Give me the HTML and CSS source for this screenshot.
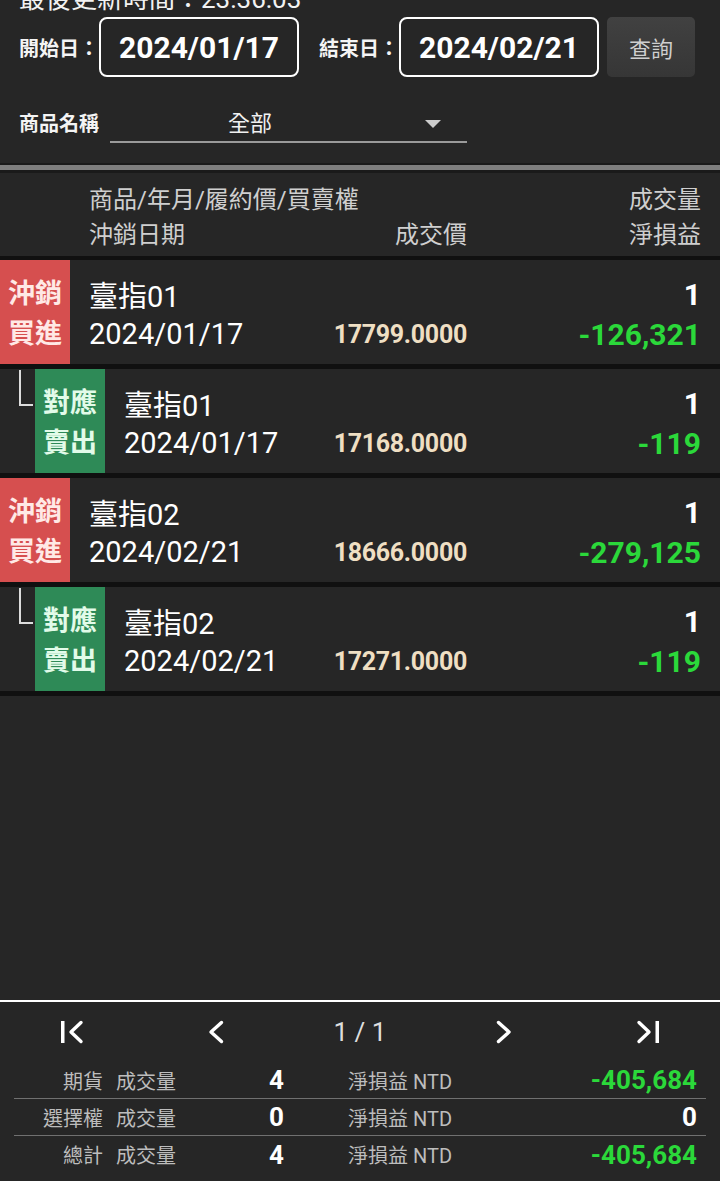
FILE: index.html
```html
<!DOCTYPE html>
<html lang="zh-Hant">
  <head>
    <meta charset="UTF-8" />
    <meta name="viewport" content="width=device-width, initial-scale=1.0" />
    <title>沖銷明細</title>
    <link rel="stylesheet" href="styles.css">
  </head>

  <body>
    <div class="updated">最後更新時間：23:36:03</div>

    <div class="query-row">
      <span class="field-label">開始日：</span>
      <div class="date-box">2024/01/17</div>
      <span class="field-label gap-left">結束日：</span>
      <div class="date-box">2024/02/21</div>
      <button class="query-btn" type="button">查詢</button>
    </div>

    <div class="product-row">
      <span class="field-label">商品名稱</span>
      <div class="dropdown">
        <span class="dropdown-text">全部</span>
        <span class="dropdown-arrow"></span>
      </div>
    </div>

    <div class="divider"></div>

    <div class="list-head">
      <div class="lead-space"></div>
      <div class="cells">
        <span>商品/年月/履約價/買賣權</span>
        <span></span>
        <span class="right">成交量</span>
        <span>沖銷日期</span>
        <span class="right">成交價</span>
        <span class="right">淨損益</span>
      </div>
    </div>

    <main class="list">
      <div class="trade">
        <div class="badge badge-buy">沖銷<br />買進</div>
        <div class="cells">
          <span class="name">臺指01</span>
          <span></span>
          <span class="qty">1</span>
          <span class="date">2024/01/17</span>
          <span class="price">17799.0000</span>
          <span class="pnl">-126,321</span>
        </div>
      </div>

      <div class="trade">
        <div class="tree"><span class="tree-line"></span></div>
        <div class="badge badge-sell">對應<br />賣出</div>
        <div class="cells">
          <span class="name">臺指01</span>
          <span></span>
          <span class="qty">1</span>
          <span class="date">2024/01/17</span>
          <span class="price">17168.0000</span>
          <span class="pnl">-119</span>
        </div>
      </div>

      <div class="trade">
        <div class="badge badge-buy">沖銷<br />買進</div>
        <div class="cells">
          <span class="name">臺指02</span>
          <span></span>
          <span class="qty">1</span>
          <span class="date">2024/02/21</span>
          <span class="price">18666.0000</span>
          <span class="pnl">-279,125</span>
        </div>
      </div>

      <div class="trade">
        <div class="tree"><span class="tree-line"></span></div>
        <div class="badge badge-sell">對應<br />賣出</div>
        <div class="cells">
          <span class="name">臺指02</span>
          <span></span>
          <span class="qty">1</span>
          <span class="date">2024/02/21</span>
          <span class="price">17271.0000</span>
          <span class="pnl">-119</span>
        </div>
      </div>
    </main>

    <footer class="bottom">
      <div class="pager">
        <span class="pager-btn">
          <svg width="24" height="24" viewBox="0 0 24 24">
            <rect x="1" y="1" width="3.5" height="22" fill="#fff" />
            <path d="M21 2.5 L11 12 L21 21.5" fill="none" stroke="#fff" stroke-width="3.4" stroke-linecap="round" stroke-linejoin="round" />
          </svg>
        </span>
        <span class="pager-btn">
          <svg width="16" height="24" viewBox="0 0 16 24">
            <path d="M13.5 2.5 L3 12 L13.5 21.5" fill="none" stroke="#fff" stroke-width="3.4" stroke-linecap="round" stroke-linejoin="round" />
          </svg>
        </span>
        <span class="pager-page">1 / 1</span>
        <span class="pager-btn">
          <svg width="16" height="24" viewBox="0 0 16 24">
            <path d="M2.5 2.5 L13 12 L2.5 21.5" fill="none" stroke="#fff" stroke-width="3.4" stroke-linecap="round" stroke-linejoin="round" />
          </svg>
        </span>
        <span class="pager-btn">
          <svg width="24" height="24" viewBox="0 0 24 24">
            <path d="M3 2.5 L13 12 L3 21.5" fill="none" stroke="#fff" stroke-width="3.4" stroke-linecap="round" stroke-linejoin="round" />
            <rect x="19.5" y="1" width="3.5" height="22" fill="#fff" />
          </svg>
        </span>
      </div>

      <div class="summary">
        <div class="sum-row">
          <span class="sum-kind">期貨</span>
          <span class="sum-label">成交量</span>
          <span class="sum-value">4</span>
          <span class="sum-label pnl-label">淨損益 NTD</span>
          <span class="sum-value loss">-405,684</span>
        </div>
        <div class="sum-row">
          <span class="sum-kind">選擇權</span>
          <span class="sum-label">成交量</span>
          <span class="sum-value">0</span>
          <span class="sum-label pnl-label">淨損益 NTD</span>
          <span class="sum-value">0</span>
        </div>
        <div class="sum-row">
          <span class="sum-kind">總計</span>
          <span class="sum-label">成交量</span>
          <span class="sum-value">4</span>
          <span class="sum-label pnl-label">淨損益 NTD</span>
          <span class="sum-value loss">-405,684</span>
        </div>
      </div>
    </footer>
  </body>
</html>
```

FILE: styles.css
```css
* {
  padding: 0;
  margin: 0;
  box-sizing: border-box;
}

body {
  display: flex;
  flex-direction: column;
  height: 100vh;
  overflow: hidden;
  background-color: #262626;
  color: #ffffff;
  font-family: Roboto, "Noto Sans CJK TC", sans-serif;
}

.updated {
  margin-top: -14px;
  padding-left: 19px;
  font-size: 26px;
  line-height: 26px;
  color: #f2f2f2;
}

/* date query */
.query-row {
  display: flex;
  align-items: center;
  margin-top: 5px;
  padding-left: 19px;
  height: 60px;
}

.field-label {
  font-size: 20px;
  font-weight: 700;
  color: #f4f4f4;
}

.gap-left {
  margin-left: 20px;
}

.date-box {
  width: 200px;
  height: 60px;
  border: 2px solid #ffffff;
  border-radius: 8px;
  display: flex;
  align-items: center;
  justify-content: center;
  font-size: 30px;
  font-weight: 700;
}

.query-btn {
  margin-left: 8px;
  width: 88px;
  height: 60px;
  border: none;
  border-radius: 5px;
  background: linear-gradient(#414141, #363636);
  color: #cfcfcf;
  font-family: inherit;
  font-size: 22px;
}

.product-row {
  display: flex;
  align-items: flex-end;
  margin-top: 24px;
  padding-left: 19px;
}

.product-row .field-label {
  line-height: 34px;
  padding-bottom: 2px;
}

.dropdown {
  display: flex;
  align-items: center;
  margin-left: 11px;
  width: 357px;
  padding-top: 6px;
  border-bottom: 2px solid #9a9a9a;
}

.dropdown-text {
  padding-left: 118px;
  font-size: 22px;
  line-height: 34px;
  color: #f0f0f0;
}

.dropdown-arrow {
  margin-left: auto;
  margin-right: 26px;
  width: 0;
  height: 0;
  border-left: 8px solid transparent;
  border-right: 8px solid transparent;
  border-top: 8px solid #cccccc;
}

.divider {
  margin-top: 20px;
  height: 10px;
  border-top: 2px solid #1a1a1a;
  border-bottom: 3px solid #1a1a1a;
  background-color: #7e7e7e;
}

/* list */
.list-head {
  display: flex;
  height: 87px;
  padding: 7px 19px 0 0;
  border-bottom: 4px solid #101010;
  font-size: 24px;
  line-height: 35px;
  color: #cfcfcf;
}

.lead-space {
  width: 70px;
}

.cells {
  flex: 1;
  display: grid;
  grid-template-columns: 1fr auto 234px;
  align-content: center;
  padding-left: 19px;
}

.right {
  text-align: right;
}

.list {
  flex: 1;
}

.trade {
  display: flex;
  height: 109px;
  padding-right: 19px;
  border-bottom: 5px solid #101010;
}

.trade .cells {
  padding-top: 4px;
  grid-template-rows: 40px 40px;
  align-items: center;
}

.badge {
  width: 70px;
  display: flex;
  align-items: center;
  justify-content: center;
  padding-top: 4px;
  font-size: 27px;
  font-weight: 700;
  line-height: 40px;
  text-align: center;
}

.badge-buy {
  background-color: #d64f4f;
  color: #ffe9e6;
}

.badge-sell {
  background-color: #2e8a57;
  color: #e2fbe9;
}

.tree {
  width: 35px;
  padding: 1px 0 0 19px;
}

.tree-line {
  display: block;
  width: 14px;
  height: 36px;
  border-left: 2px solid #dddddd;
  border-bottom: 2px solid #dddddd;
}

.name,
.date {
  font-size: 29px;
}

.qty,
.pnl {
  text-align: right;
  font-size: 30px;
  font-weight: 700;
}

.price {
  text-align: right;
  font-size: 25px;
  font-weight: 700;
  color: #efdfc3;
  letter-spacing: -0.3px;
}

.pnl,
.loss {
  color: #2bd83a;
}

/* bottom panel */
.bottom {
  border-top: 2px solid #ffffff;
  padding-bottom: 8px;
}

.pager {
  display: grid;
  grid-template-columns: repeat(5, 1fr);
  align-items: center;
  justify-items: center;
  height: 60px;
}

.pager-btn svg {
  display: block;
}

.pager-page {
  font-size: 26px;
  color: #dddddd;
}

.summary {
  margin: 0 14px;
}

.sum-row {
  display: grid;
  grid-template-columns: 89px 73px 108px 1fr auto;
  align-items: center;
  height: 37px;
  padding-right: 9px;
  border-bottom: 1px solid #707070;
}

.sum-row:last-child {
  border-bottom: none;
}

.sum-kind {
  text-align: right;
  font-size: 20px;
  color: #bdbdbd;
}

.sum-label {
  padding-left: 13px;
  font-size: 20px;
  color: #bdbdbd;
}

.pnl-label {
  padding-left: 64px;
}

.sum-value {
  text-align: right;
  font-size: 26px;
  font-weight: 700;
}
```
